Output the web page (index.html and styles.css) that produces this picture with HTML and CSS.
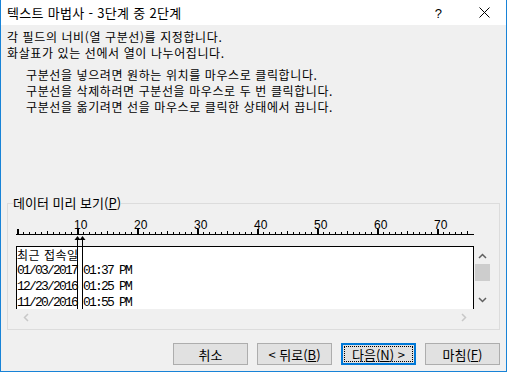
FILE: index.html
```html
<!DOCTYPE html>
<html lang="ko">
<head>
    <meta charset="UTF-8">
    <title>텍스트 마법사 - 3단계 중 2단계</title>
    <link rel="stylesheet" href="styles.css">
</head>
<body>
    <div class="window">
        <!-- 제목 표시줄 -->
        <div class="titlebar">
            <span class="title">텍스트 마법사 - 3단계 중 2단계</span>
            <span class="help">?</span>
            <svg class="close" width="11" height="11" viewBox="0 0 11 11">
                <path d="M0.5 0.5L10.5 10.5M10.5 0.5L0.5 10.5" stroke="#000" stroke-width="1"/>
            </svg>
        </div>

        <div class="content">
            <p class="intro">각 필드의 너비(열 구분선)를 지정합니다.<br>화살표가 있는 선에서 열이 나누어집니다.</p>
            <ul class="hints">
                <li>구분선을 넣으려면 원하는 위치를 마우스로 클릭합니다.</li>
                <li>구분선을 삭제하려면 구분선을 마우스로 두 번 클릭합니다.</li>
                <li>구분선을 옮기려면 선을 마우스로 클릭한 상태에서 끕니다.</li>
            </ul>

            <fieldset class="preview-group">
                <legend>데이터 미리 보기(<u>P</u>)</legend>
                <div class="preview">
                    <!-- 눈금자 -->
                    <svg class="ruler" width="458" height="30" viewBox="0 0 458 30">
                        <defs>
                            <pattern id="tick1" x="1" y="0" width="6" height="30" patternUnits="userSpaceOnUse">
                                <rect x="0" y="16" width="1" height="2" fill="#000"/>
                            </pattern>
                            <pattern id="tick5" x="1" y="0" width="30" height="30" patternUnits="userSpaceOnUse">
                                <rect x="0" y="15" width="1" height="3" fill="#000"/>
                            </pattern>
                            <pattern id="tick10" x="1" y="0" width="60" height="30" patternUnits="userSpaceOnUse">
                                <rect x="0" y="13" width="2" height="5" fill="#000"/>
                            </pattern>
                        </defs>
                        <rect x="0" y="0" width="457" height="19" fill="url(#tick1)"/>
                        <rect x="0" y="0" width="457" height="19" fill="url(#tick5)"/>
                        <rect x="0" y="0" width="457" height="19" fill="url(#tick10)"/>
                        <rect x="0" y="18" width="458" height="1" fill="#000"/>
                        <g class="ruler-num">
                            <text x="58" y="13">10</text>
                            <text x="118" y="13">20</text>
                            <text x="178" y="13">30</text>
                            <text x="238" y="13">40</text>
                            <text x="298" y="13">50</text>
                            <text x="358" y="13">60</text>
                            <text x="418" y="13">70</text>
                        </g>
                        <!-- 구분선 화살표 -->
                        <polygon points="61.5,20 58.5,24 64.5,24" fill="#000"/>
                        <rect x="61" y="22" width="1" height="8" fill="#000"/>
                        <polygon points="66.5,20 63.5,24 69.5,24" fill="#000"/>
                        <rect x="66" y="22" width="1" height="8" fill="#000"/>
                    </svg>

                    <div class="data-row">
                        <div class="data-box">
                            <div class="row head">최근 접속일</div>
                            <div class="row">01/03/2017 01:37 PM</div>
                            <div class="row">12/23/2016 01:25 PM</div>
                            <div class="row">11/20/2016 01:55 PM</div>
                            <div class="break" style="left: 60px"></div>
                            <div class="break" style="left: 65px"></div>
                        </div>
                        <div class="vscroll">
                            <svg class="chev" width="9" height="6" viewBox="0 0 9 6"><path d="M1 5L4.5 1.5L8 5" fill="none" stroke="#606060" stroke-width="1.5"/></svg>
                            <div class="thumb"></div>
                            <div class="vspace"></div>
                            <svg class="chev" width="9" height="6" viewBox="0 0 9 6"><path d="M1 1L4.5 4.5L8 1" fill="none" stroke="#606060" stroke-width="1.5"/></svg>
                        </div>
                    </div>

                    <div class="hscroll">
                        <svg width="6" height="9" viewBox="0 0 6 9"><path d="M5 1L1.5 4.5L5 8" fill="none" stroke="#c8c8c8" stroke-width="1.5"/></svg>
                        <svg width="6" height="9" viewBox="0 0 6 9"><path d="M1 1L4.5 4.5L1 8" fill="none" stroke="#c8c8c8" stroke-width="1.5"/></svg>
                    </div>
                </div>
            </fieldset>

            <div class="buttons">
                <button class="btn">취소</button>
                <button class="btn">&lt; 뒤로(<u>B</u>)</button>
                <button class="btn default"><span class="focus">다음(<u>N</u>) &gt;</span></button>
                <button class="btn">마침(<u>F</u>)</button>
            </div>
        </div>
    </div>
</body>
</html>
```

FILE: styles.css
```css
body {
    margin: 0;
    font-family: "Noto Sans CJK KR", "Liberation Sans", sans-serif;
    font-size: 13px;
    color: #000;
    background: #f0f0f0;
}

/* 창 테두리 */
.window {
    width: 507px;
    height: 372px;
    box-sizing: border-box;
    border: 1px solid #1883d7;
    border-top: none;
    background: #f0f0f0;
    display: flex;
    flex-direction: column;
}

.titlebar {
    height: 25px;
    background: #fff;
    display: flex;
    align-items: center;
    padding-left: 6px;
    flex-shrink: 0;
}

.title {
    flex: 1;
    line-height: 16px;
    letter-spacing: 0.3px;
}

.help {
    font-family: "Liberation Sans", sans-serif;
    font-size: 13px;
    margin-right: 37px;
    margin-top: 1px;
}

.close {
    margin-right: 16px;
    display: block;
}

.content {
    padding: 4px 6px 0 6px;
}

/* 설명 문장 */
.intro,
.hints {
    font-size: 12px;
    letter-spacing: 0.6px;
    line-height: 16px;
}

.intro {
    margin: 0;
}

.hints {
    list-style: none;
    margin: 6px 0 0 0;
    padding: 0 0 0 19px;
}

/* 데이터 미리 보기 그룹 */
.preview-group {
    margin: 81px 0 0 0;
    padding: 6px 7px 3px 8px;
    border: 1px solid #dcdcdc;
    min-width: 0;
}

.preview-group legend {
    padding: 0;
    margin-left: -3px;
    line-height: 14px;
}

.preview {
    width: 475px;
}

.ruler {
    display: block;
}

.ruler-num text {
    font-family: "Liberation Sans", sans-serif;
    font-size: 12px;
    fill: #000;
}

.data-row {
    display: flex;
    height: 63px;
}

.data-box {
    position: relative;
    width: 458px;
    box-sizing: border-box;
    border: 1px solid #000;
    border-bottom: none;
    background: #fff;
    overflow: hidden;
}

.row {
    height: 16px;
    line-height: 16px;
    white-space: pre;
    font-family: "Liberation Mono", monospace;
    font-size: 13px;
    letter-spacing: -1.8px;
}

.row.head {
    font-family: "Noto Sans CJK KR", sans-serif;
    font-size: 12px;
    letter-spacing: 0.5px;
}

/* 열 구분선 */
.break {
    position: absolute;
    top: 0;
    bottom: 0;
    width: 1px;
    background: #000;
}

.vscroll {
    width: 17px;
    display: flex;
    flex-direction: column;
    align-items: center;
    padding-top: 7px;
    box-sizing: border-box;
}

.thumb {
    width: 15px;
    height: 17px;
    background: #cdcdcd;
    margin-top: 5px;
}

.vspace {
    flex: 1;
}

.chev {
    display: block;
    flex-shrink: 0;
}

.vscroll .chev:last-child {
    margin-bottom: 6px;
}

.hscroll {
    width: 458px;
    height: 17px;
    display: flex;
    align-items: center;
    justify-content: space-between;
    padding: 0 7px;
    box-sizing: border-box;
}

.hscroll svg {
    display: block;
}

/* 버튼 */
.buttons {
    display: flex;
    justify-content: flex-end;
    gap: 9px;
    margin-top: 13px;
}

.btn {
    width: 75px;
    height: 22px;
    padding: 0;
    margin: 0;
    font-family: "Noto Sans CJK KR", "Liberation Sans", sans-serif;
    font-size: 13px;
    color: #000;
    background: #e1e1e1;
    border: 1px solid #adadad;
    display: flex;
    align-items: center;
    justify-content: center;
}

.btn.default {
    border: 2px solid #0078d7;
}

.focus {
    display: flex;
    align-items: center;
    justify-content: center;
    width: 67px;
    height: 14px;
    border: 1px dotted #000;
}
```
